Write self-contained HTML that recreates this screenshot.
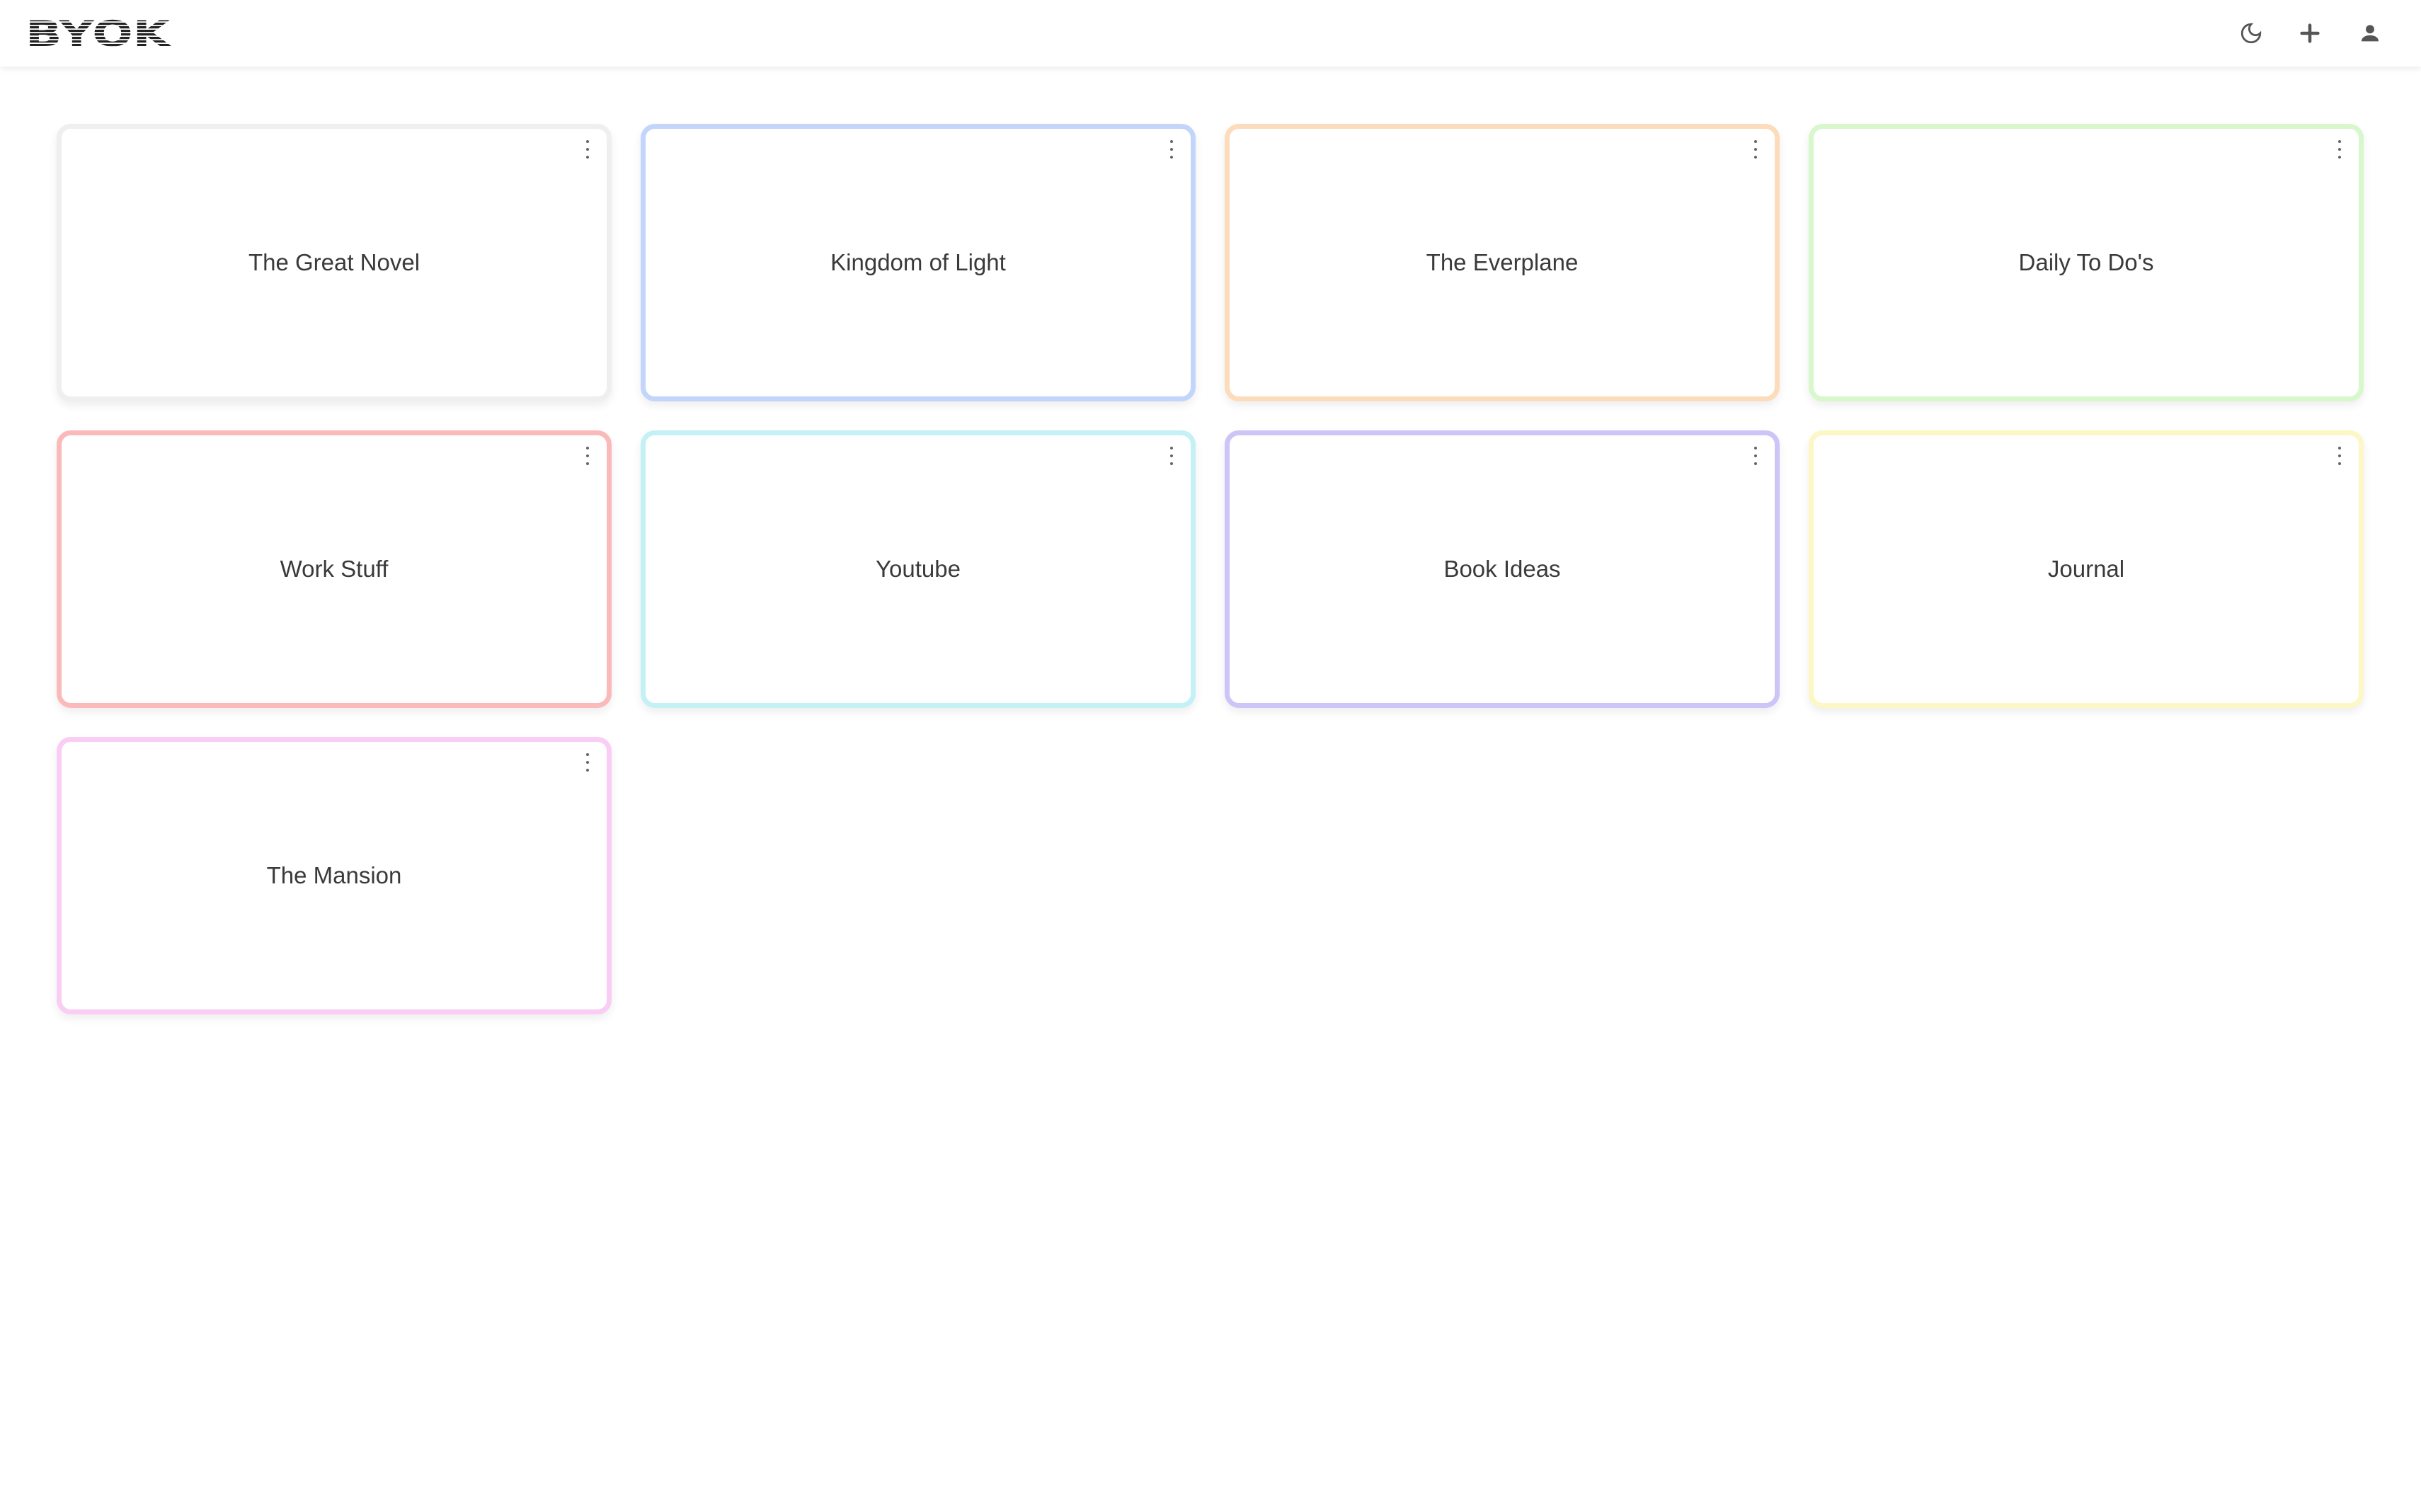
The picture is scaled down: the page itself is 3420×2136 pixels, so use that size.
<!DOCTYPE html>
<html><head><meta charset="utf-8"><style>
*{box-sizing:border-box;margin:0;padding:0}
html,body{width:3420px;height:2136px;background:#fff;overflow:hidden;font-family:"Liberation Sans",sans-serif}
.hdr{position:absolute;left:0;top:0;width:3420px;height:94px;background:#fff;box-shadow:0 3px 8px rgba(0,0,0,.08)}
.logo{position:absolute;left:36px;top:22px}
.ic{position:absolute;top:30px;width:34px;height:34px}
.card{position:absolute;width:784px;height:392px;border:7px solid #eee;border-radius:20px;background:#fff;box-shadow:0 6px 12px rgba(0,0,0,.07);display:flex;align-items:center;justify-content:center;font-size:33px;color:#3a3a3a}
.dots{position:absolute;right:25px;top:16px;width:4px}
.dots i{display:block;width:4px;height:4px;border-radius:50%;background:#666;margin-bottom:7px}
</style></head><body>
<div class="hdr">
<svg class="logo" width="210" height="48" viewBox="0 0 210 48">
<defs><pattern id="st" width="10" height="5" patternUnits="userSpaceOnUse"><rect width="10" height="3.2" fill="#222"/></pattern></defs>
<text x="0" y="43" font-family="DejaVu Sans, Liberation Sans, sans-serif" font-weight="900" font-size="50" textLength="204" lengthAdjust="spacingAndGlyphs" fill="url(#st)">BYOK</text>
</svg>
<svg class="ic" style="left:3163px" viewBox="0 0 24 24" fill="none" stroke="#555" stroke-width="2" stroke-linecap="round"><path d="M12 3a6 6 0 0 0 9 9 9 9 0 1 1-9-9z"/></svg>
<svg class="ic" style="left:3246px" viewBox="0 0 24 24" fill="none" stroke="#555" stroke-width="3.2" stroke-linecap="round"><path d="M12 4v16M4 12h16"/></svg>
<svg class="ic" style="left:3331px" viewBox="0 0 24 24" fill="#555"><circle cx="12" cy="8" r="4.2"/><path d="M3.5 20c0-4 4-6 8.5-6s8.5 2 8.5 6z"/></svg>
</div>
<div class="card" style="left:80px;top:175px;border-color:#efefef">The Great Novel<div class="dots"><i></i><i></i><i></i></div></div>
<div class="card" style="left:905px;top:175px;border-color:#c3d5fb">Kingdom of Light<div class="dots"><i></i><i></i><i></i></div></div>
<div class="card" style="left:1730px;top:175px;border-color:#fcdcbb">The Everplane<div class="dots"><i></i><i></i><i></i></div></div>
<div class="card" style="left:2555px;top:175px;border-color:#d8f7cd">Daily To Do's<div class="dots"><i></i><i></i><i></i></div></div>
<div class="card" style="left:80px;top:608px;border-color:#fbbaba">Work Stuff<div class="dots"><i></i><i></i><i></i></div></div>
<div class="card" style="left:905px;top:608px;border-color:#c4f1f5">Youtube<div class="dots"><i></i><i></i><i></i></div></div>
<div class="card" style="left:1730px;top:608px;border-color:#cdc5f7">Book Ideas<div class="dots"><i></i><i></i><i></i></div></div>
<div class="card" style="left:2555px;top:608px;border-color:#fcf7c4">Journal<div class="dots"><i></i><i></i><i></i></div></div>
<div class="card" style="left:80px;top:1041px;border-color:#f9cdf4">The Mansion<div class="dots"><i></i><i></i><i></i></div></div>
</body></html>
